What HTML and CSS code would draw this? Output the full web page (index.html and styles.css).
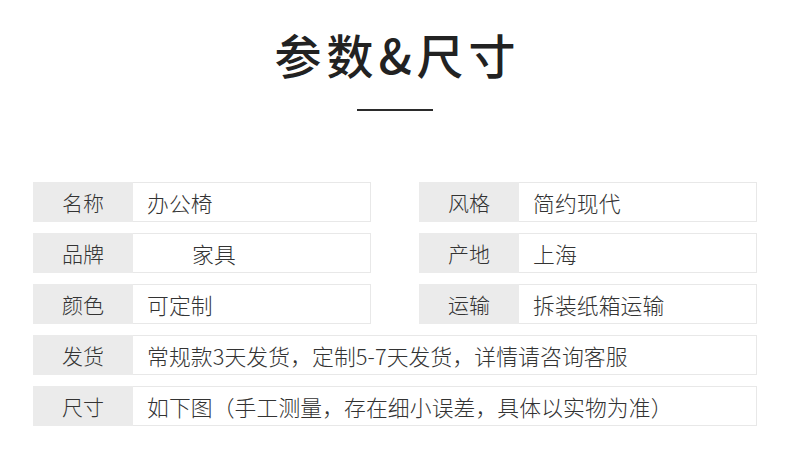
FILE: index.html
```html
<!DOCTYPE html>
<html lang="zh-CN">
<head>
<meta charset="utf-8">
<title>参数&amp;尺寸</title>
<link rel="stylesheet" href="styles.css">
</head>
<body>
<div class="page">
  <h1 class="title">参数&amp;尺寸</h1>
  <div class="rule"></div>
  <div class="table">
    <div class="row"><div class="label">名称</div><div class="value">办公椅</div></div>
    <div class="row"><div class="label">风格</div><div class="value">简约现代</div></div>
    <div class="row"><div class="label">品牌</div><div class="value"><span class="brand-gap"></span>家具</div></div>
    <div class="row"><div class="label">产地</div><div class="value">上海</div></div>
    <div class="row"><div class="label">颜色</div><div class="value">可定制</div></div>
    <div class="row"><div class="label">运输</div><div class="value">拆装纸箱运输</div></div>
    <div class="row wide"><div class="label">发货</div><div class="value">常规款3天发货，定制5-7天发货，详情请咨询客服</div></div>
    <div class="row wide"><div class="label">尺寸</div><div class="value">如下图（手工测量，存在细小误差，具体以实物为准）</div></div>
  </div>
</div>
</body>
</html>
```
FILE: styles.css
```css
html, body {
  margin: 0;
  padding: 0;
  background: #ffffff;
}
body {
  font-family: "Noto Sans CJK SC", "Noto Sans", sans-serif;
  color: #333333;
}
.page {
  width: 790px;
  height: 471px;
  padding-top: 24px;
  box-sizing: border-box;
  display: flex;
  flex-direction: column;
  align-items: center;
}
.title {
  margin: 0;
  height: 60px;
  line-height: 60px;
  font-size: 47px;
  font-weight: 500;
  letter-spacing: 5px;
  padding-left: 5px;
  color: #222222;
}
.rule {
  width: 76px;
  height: 2px;
  background: #2b2b2b;
  margin-top: 25px;
}
.table {
  margin-top: 71px;
  width: 724px;
  display: grid;
  grid-template-columns: 338px 338px;
  column-gap: 48px;
  row-gap: 11px;
}
.row {
  display: grid;
  grid-template-columns: 100px 1fr;
  height: 40px;
}
.row.wide {
  grid-column: 1 / span 2;
}
.label {
  background: #ebebeb;
  display: flex;
  align-items: center;
  justify-content: center;
  font-size: 21px;
  font-weight: 300;
  color: #333333;
}
.value {
  border: 1px solid #e8e8e8;
  border-left: none;
  display: flex;
  align-items: center;
  padding-left: 14px;
  font-size: 21.8px;
  font-weight: 300;
  letter-spacing: 0.1px;
  color: #333333;
}
.brand-gap {
  display: inline-block;
  width: 45px;
}
```
